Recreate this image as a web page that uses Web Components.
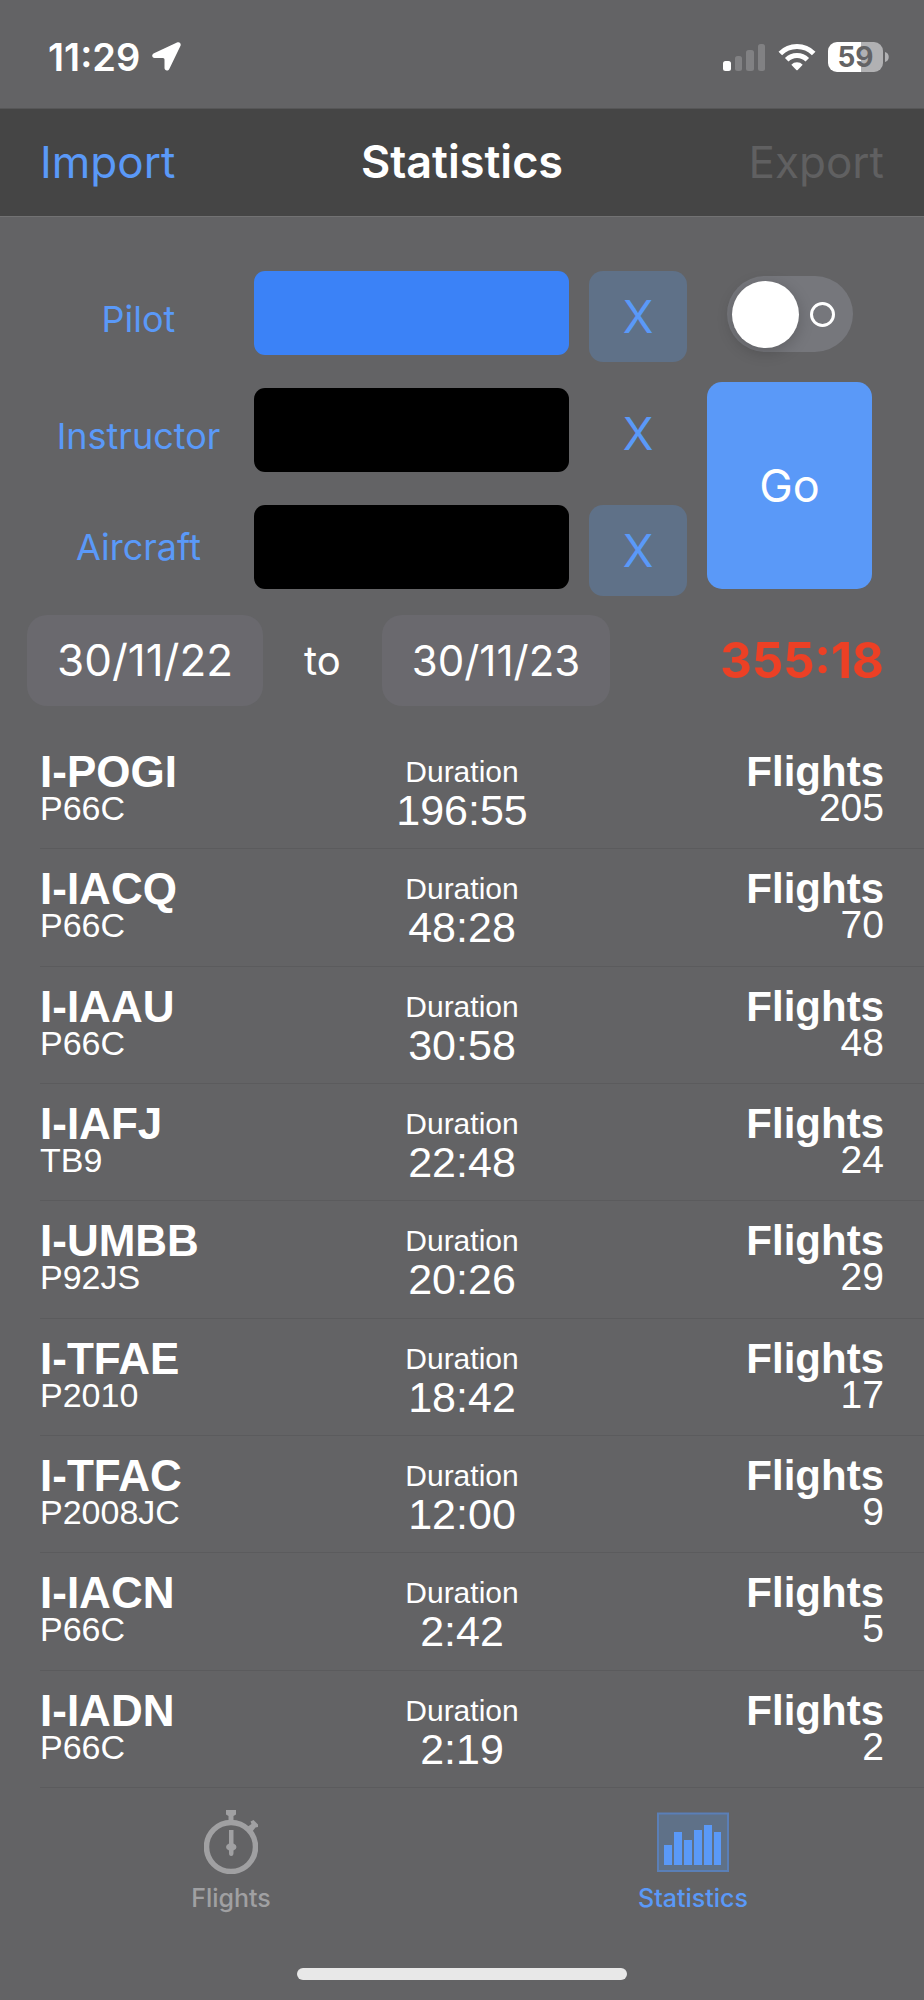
<!DOCTYPE html>
<html lang="en">
<head>
<meta charset="utf-8">
<meta name="viewport" content="width=device-width, initial-scale=1">
<title>Statistics</title>
<style>
  :root {
    --bg: #636365;
    --bar: #454545;
    --tint: #5a99f8;
    --tint-soft: #5f7188;
    --chip: #6a696e;
    --ui: Inter, "Liberation Sans", sans-serif;
    --list: "Liberation Sans", Arial, sans-serif;
  }
  body { margin: 0; background: var(--bg); color: #fff; font-family: var(--ui); }
</style>
</head>
<body>
<stats-app></stats-app>

<script>
const define = (name, html, setup) => {
  const tpl = document.createElement('template');
  tpl.innerHTML = `<style>*{box-sizing:border-box}button,input{font:inherit;border:0;margin:0;padding:0}</style>${html}`;
  customElements.define(name, class extends HTMLElement {
    connectedCallback() {
      if (this.shadowRoot) return;
      const root = this.attachShadow({ mode: 'open' });
      root.append(tpl.content.cloneNode(true));
      if (setup) setup(root, this);
    }
  });
};

define('status-bar', `
  <style>
    :host { display: flex; align-items: center; justify-content: space-between; height: 108px; padding: 5px 35px 0 48px; }
    .group { display: flex; align-items: center; gap: 12px; }
    time { font-size: 38px; line-height: 44px; font-weight: 600; }
    svg { display: block; }
    .battery { display: flex; align-items: center; gap: 2px; }
    .cell { width: 55px; height: 30px; border-radius: 9px; background: linear-gradient(90deg, #fff 60%, #b1b1b3 60%);
      color: var(--bg); font-size: 28px; line-height: 30px; font-weight: 700; text-align: center; }
  </style>
  <div class="group">
    <time>11:29</time>
    <svg width="29" height="29" viewBox="0 0 29 29" aria-hidden="true"><path d="M25 .6 2 11.3C-.7 12.600-.2 16 2.500 16H11q1.500 0 1.500 1.500V26c0 2.800 3.500 3.500 4.800 1L28.400 4C29.500 1.500 27.500-.5 25 .6Z" fill="#fff"/></svg>
  </div>
  <div class="group">
    <svg width="43" height="28" viewBox="0 0 43 28" aria-hidden="true">
      <rect x="0" y="18" width="8" height="10" rx="2.500" fill="#fff"/>
      <g fill="#818183"><rect x="12" y="13" width="7" height="15" rx="2.500"/><rect x="23" y="7" width="8" height="21" rx="2.500"/><rect x="35" y="1" width="7" height="27" rx="2.500"/></g>
    </svg>
    <svg width="38" height="28" viewBox="0 0 38 28" aria-hidden="true">
      <g fill="none" stroke="#fff" stroke-width="5"><path d="M2.300 10.500a23.500 23.500 0 0 1 33.400 0"/><path d="M8.700 16.700a14.500 14.500 0 0 1 20.600 0"/></g>
      <path d="M13.300 21.700a8 8 0 0 1 11.400 0L19.700 27q-.7.700-1.400 0Z" fill="#fff"/>
    </svg>
    <div class="battery"><div class="cell">59</div>
      <svg width="4" height="12" viewBox="0 0 4 12" aria-hidden="true"><path d="M0 1c5 1 5 9 0 10Z" fill="#b1b1b3"/></svg></div>
  </div>`);

define('nav-bar', `
  <style>
    :host { display: grid; grid-template-columns: 1fr auto 1fr; align-items: center; height: 109px; padding: 0 40px 2px;
      box-sizing: border-box; background: var(--bar); border-top: 1px solid #565657; border-bottom: 1px solid #727273; }
    button { background: none; color: var(--tint); font-size: 44px; line-height: 56px; justify-self: start; }
    button:disabled { color: #606061; justify-self: end; }
    h1 { margin: 0; font-size: 45px; line-height: 56px; font-weight: 600; }
  </style>
  <button type="button">Import</button>
  <h1><slot></slot></h1>
  <button type="button" disabled>Export</button>`);

define('filter-row', `
  <style>
    :host { display: grid; grid-template-columns: 191fr 315fr 98fr; column-gap: 20px; height: 91px; align-items: start; }
    label { color: var(--tint); font-size: 36px; line-height: 96px; text-align: center; }
    :host([raised]) label { line-height: 84px; }
    input { width: 100%; height: 84px; border-radius: 11px; background: #000; color: #fff; padding: 0 16px; font-size: 36px; }
    :host([active]) input { background: #3b82f7; }
    button { height: 91px; border-radius: 14px; background: var(--tint-soft); color: var(--tint); font-size: 45px; }
    :host([plain]) button { background: none; }
  </style>
  <label for="field"></label>
  <input id="field" type="text">
  <button type="button">X</button>`,
  (root, host) => {
    const name = host.getAttribute('label');
    root.querySelector('label').textContent = name;
    root.querySelector('button').setAttribute('aria-label', 'Clear ' + name);
  });

define('toggle-switch', `
  <style>
    :host { display: block; }
    label { display: block; }
    input { appearance: none; display: flex; align-items: center; justify-content: space-between; width: 126px; height: 76px;
      padding: 0 18px 0 5px; border-radius: 38px; background: #76777c; }
    input::before { content: ""; width: 67px; height: 67px; border-radius: 50%; background: #fff; box-shadow: 0 4px 16px #0003; }
    input::after { content: ""; width: 25px; height: 25px; border-radius: 50%; border: 3px solid #fff; box-sizing: border-box; }
    input:checked { flex-direction: row-reverse; background: var(--tint); }
  </style>
  <label><input type="checkbox" role="switch" aria-label="Filter"></label>`);

define('filter-panel', `
  <style>
    :host { display: grid; grid-template-columns: 1fr 165px; column-gap: 20px; padding: 54px 52px 0 43px; }
    .rows { display: grid; row-gap: 26px; }
    .side { display: flex; flex-direction: column; align-items: center; gap: 30px; padding: 5px 0 7px; }
    .go { flex: 1; align-self: stretch; border-radius: 15px; background: var(--tint); color: #fff; font-size: 45px; }
  </style>
  <div class="rows">
    <filter-row label="Pilot" active></filter-row>
    <filter-row label="Instructor" plain></filter-row>
    <filter-row label="Aircraft" raised></filter-row>
  </div>
  <div class="side">
    <toggle-switch></toggle-switch>
    <button class="go" type="button">Go</button>
  </div>`);

define('date-range', `
  <style>
    :host { display: flex; align-items: center; gap: 41px; padding: 19px 40px 26px 27px; line-height: 91px; white-space: nowrap; }
    button { height: 91px; padding: 0 30px; border-radius: 20px; background: var(--chip); color: #fff; font-size: 42px; }
    button.from { font-size: 44px; }
    span { font-size: 40px; }
    output { margin-left: auto; color: #ec4025; font-size: 49px; font-weight: 700; }
  </style>
  <button class="from" type="button">30/11/22</button>
  <span>to</span>
  <button type="button">30/11/23</button>
  <output>355:18</output>`);

define('flight-row', `
  <style>
    :host { display: grid; grid-template-columns: 1fr 1fr 1fr; margin-left: 40px; padding: 16px 40px 0 0;
      border-bottom: 1px solid #5b5b5d; font-family: var(--list); }
    div { display: flex; flex-direction: column; }
    .mid { align-items: center; }
    .end { align-items: flex-end; }
    .reg { font-size: 44px; line-height: 48px; font-weight: 700; }
    .model { font-size: 34px; line-height: 24px; }
    .cap { font-size: 30px; line-height: 48px; }
    .time { font-size: 43px; line-height: 28px; }
    .flights { font-size: 42px; line-height: 48px; font-weight: 700; }
    .count { font-size: 39px; line-height: 24px; }
  </style>
  <div><span class="reg"><slot name="reg"></slot></span><span class="model"><slot name="model"></slot></span></div>
  <div class="mid"><span class="cap">Duration</span><span class="time"><slot name="time"></slot></span></div>
  <div class="end"><span class="flights">Flights</span><span class="count"><slot name="count"></slot></span></div>`);

define('flight-list', `
  <style>:host { display: grid; grid-auto-rows: 1fr; }</style>`,
  (root, host) => {
    host.setAttribute('role', 'list');
    const data = [
      ['I-POGI', 'P66C', '196:55', 205], ['I-IACQ', 'P66C', '48:28', 70], ['I-IAAU', 'P66C', '30:58', 48],
      ['I-IAFJ', 'TB9', '22:48', 24], ['I-UMBB', 'P92JS', '20:26', 29], ['I-TFAE', 'P2010', '18:42', 17],
      ['I-TFAC', 'P2008JC', '12:00', 9], ['I-IACN', 'P66C', '2:42', 5], ['I-IADN', 'P66C', '2:19', 2]
    ];
    for (const values of data) {
      const row = document.createElement('flight-row');
      row.setAttribute('role', 'listitem');
      ['reg', 'model', 'time', 'count'].forEach((slot, i) => {
        const s = document.createElement('span');
        s.slot = slot;
        s.textContent = values[i];
        row.append(s);
      });
      root.append(row);
    }
  });

define('tab-bar', `
  <style>
    :host { display: block; padding: 22px 0 20px; }
    nav { display: grid; grid-template-columns: 1fr 1fr; }
    a { display: flex; flex-direction: column; align-items: center; gap: 8px; color: #a0a0a2; text-decoration: none;
      font-size: 25px; line-height: 32px; font-weight: 500; }
    a[aria-current] { color: var(--tint); }
    svg { display: block; }
    .home { width: 330px; height: 12px; margin: 54px auto 0; border-radius: 6px; background: #e8e8e8; }
  </style>
  <nav>
    <a href="#flights">
      <svg width="54" height="64" viewBox="0 0 54 64" aria-hidden="true">
        <circle cx="27" cy="37" r="24.500" fill="none" stroke="currentColor" stroke-width="5.500"/>
        <g fill="currentColor"><path d="M22 0h10v4.500l-2.500 1.500v6h-5V6L22 4.500Z"/><path d="M42.500 17.500 47.500 14 46.500 11.500 49.500 10 54 14.500V17L51.500 17.500 48 22Z"/>
        <path d="M25 20h4.500v13.500q3 1.200 3 3.500t-3 3.500V43q0 3-2.300 3T25 43v-2.500q-3-1.200-3-3.500t3-3.500Z"/></g>
      </svg>Flights</a>
    <a href="#statistics" aria-current="page">
      <svg width="72" height="64" viewBox="0 0 72 64" aria-hidden="true">
        <rect x="1" y="3.500" width="70" height="57.500" fill="#5f7188" stroke="#5a7fb7" stroke-width="2"/>
        <path d="M7 35h8v20H7ZM17 22h8v33h-8ZM27 30h8v25h-8ZM37 20h8v35h-8ZM47 15h8v40h-8ZM57 22h7v33h-7Z" fill="currentColor"/>
      </svg>Statistics</a>
  </nav>
  <div class="home"></div>`);

define('stats-app', `
  <style>
    :host { display: flex; flex-direction: column; min-height: 100vh; }
    status-bar { box-sizing: border-box; }
    main { flex: 1; display: flex; flex-direction: column; }
    flight-list { flex: 1; }
  </style>
  <status-bar></status-bar>
  <nav-bar>Statistics</nav-bar>
  <main>
    <filter-panel></filter-panel>
    <date-range></date-range>
    <flight-list></flight-list>
  </main>
  <tab-bar></tab-bar>`);
</script>
</body>
</html>
